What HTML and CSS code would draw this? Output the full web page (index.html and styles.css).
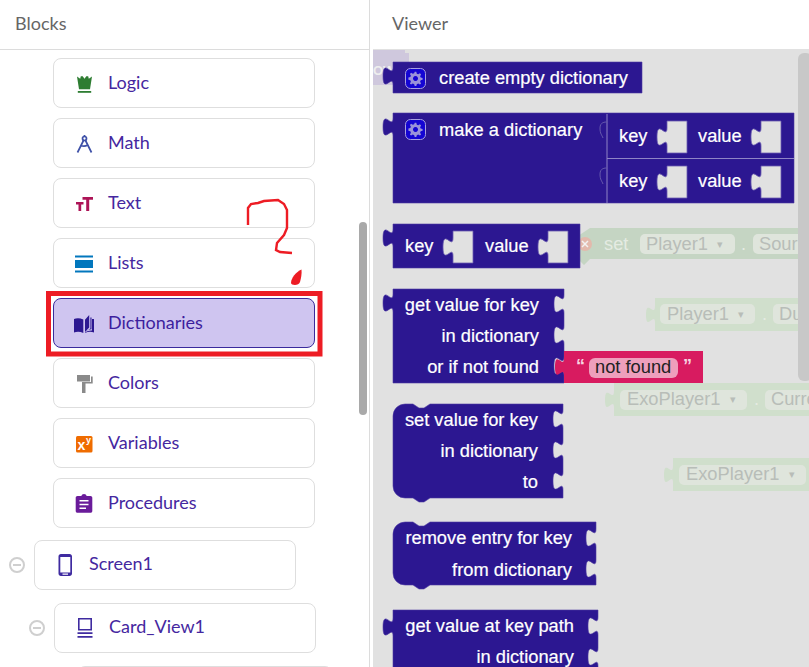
FILE: index.html
```html
<!DOCTYPE html>
<html lang="en">
<head>
<meta charset="utf-8">
<title>Blocks and Viewer</title>
<link rel="stylesheet" href="styles.css">
</head>
<body>
<div class="app">
  <aside class="sidebar">
    <h2 class="panel-title">Blocks</h2>
    <div class="tree">
      <div class="drawer-list">
        <button class="item"><span class="ico"><svg viewBox="0 0 20 20" width="20" height="20"><path class="i-logic" d="M3 3.500 6.200 5.800 6.800 3.200H8.700L10.500 5.800 12.300 3.200H14.200L14.800 5.800 18 3.500 16 16.200H5z"/><path class="i-logic" d="M3.800 18h13.400v1.800H3.800z"/></svg></span><span class="label">Logic</span></button>
        <button class="item"><span class="ico"><svg viewBox="0 0 20 20" width="20" height="20"><circle class="i-math-s" cx="10.500" cy="5.500" r="2"/><path class="i-math-s" d="M10.500 2v1.500M9.500 7.500 3.500 19.500M11.500 7.500 17.500 19.500M6.500 12.500c2.500 1 5 1 7-.5"/></svg></span><span class="label">Math</span></button>
        <button class="item"><span class="ico"><svg viewBox="0 0 20 20" width="20" height="20"><path class="i-text" d="M8.500 4h10.500v2.800h-3.800V18h-3V6.800H8.500zM2 9h7.500v2.500H7.200V18H4.500V11.500H2z"/></svg></span><span class="label">Text</span></button>
        <button class="item"><span class="ico"><svg viewBox="0 0 20 20" width="20" height="20"><path class="i-lists" d="M1 2.500h18v2H1zM1 7h18v8H1zM1 17.500h18v2H1z"/></svg></span><span class="label">Lists</span></button>
        <button class="item is-active"><span class="ico"><svg viewBox="0 0 20 20" width="20" height="20"><path class="i-dict" d="M0 6c2.500-1.200 6-1.200 9.300.5V20c-3-1.500-6.500-1.600-9.300-.5zM11 6.700 15.200 2v12.500L11 19z"/><path class="i-dict" d="M16.400 4.500h1.100v11.800c-2.500 0-4.600.8-6.500 2.800l5.400-3.600zM18 6h2v13.500c-2.800-1-6-1-9 .5v-.4c2-1.500 4.500-2.200 7-2z"/></svg></span><span class="label">Dictionaries</span></button>
        <button class="item"><span class="ico"><svg viewBox="0 0 20 20" width="20" height="20"><path class="i-colors" d="M3 2h13v6.500H3zM17 3.500h1.700v7H11.500V20H8V9h9z"/></svg></span><span class="label">Colors</span></button>
        <button class="item"><span class="ico"><svg viewBox="0 0 20 20" width="20" height="20"><rect class="i-vars" x="2" y="3" width="16.500" height="16.500" rx="1.500"/><text class="i-vars-x" x="3.500" y="16.500">x</text><text class="i-vars-y" x="12" y="10">y</text></svg></span><span class="label">Variables</span></button>
        <button class="item"><span class="ico"><svg viewBox="0 0 20 20" width="20" height="20"><path class="i-proc" d="M3.500 3H7.300a2.800 2.800 0 0 1 5.400 0h3.800c1 0 1.800.8 1.800 1.800V18c0 1-.8 1.800-1.800 1.800h-13c-1 0-1.800-.8-1.800-1.800V4.800C1.700 3.800 2.500 3 3.500 3zM5.500 7v1.600h9V7zM5.500 10.700v1.600h9v-1.600zM5.500 14.400V16h6.500v-1.600z" fill-rule="evenodd"/></svg></span><span class="label">Procedures</span></button>
      </div>
      <div class="tree-row tree-row-screen">
        <span class="toggle"></span>
        <button class="item"><span class="ico ico-tall"><svg viewBox="0 0 20 22" width="20" height="22"><path class="i-comp" fill-rule="evenodd" d="M6 0h8.500c1.500 0 2.500 1.100 2.500 2.500v17c0 1.400-1 2.500-2.500 2.500H6c-1.500 0-2.500-1.100-2.500-2.500v-17C3.500 1.100 4.500 0 6 0zM5.300 3v15.500h10V3zM7.500 19.500V20.700h5.500v-1.200z"/></svg></span><span class="label">Screen1</span></button>
      </div>
      <div class="tree-row tree-row-card">
        <span class="toggle"></span>
        <button class="item"><span class="ico ico-tall"><svg viewBox="0 0 20 22" width="20" height="22"><path class="i-comp" fill-rule="evenodd" d="M3 1h14v12.500H3zM4.600 2.600v9.300h10.800V2.600zM2.500 15.300h15v1.600h-15zM2.500 19h15v1.700h-15z"/></svg></span><span class="label">Card_View1</span></button>
      </div>
      <div class="tree-row tree-row-last">
        <button class="item item-cut"></button>
      </div>
    </div>
    <div class="sidebar-thumb"></div>
  </aside>
  <main class="viewer">
    <h2 class="panel-title panel-title-viewer">Viewer</h2>
    <div class="canvas">
      <svg class="workspace" viewBox="373 49 436 618" width="436" height="618">
        <defs>
          <path id="hole" d="M20 0V32H0V25c0-12-10 10-10-9s10 3 10-9V0z"/>
          <g id="gear">
            <rect class="gear-box" x="0.500" y="0.500" width="20" height="20" rx="5"/>
            <path class="gear-teeth" d="M9.700 3.800h1.600l.5 1.900 1.400.6 1.700-1 1.200 1.200-1 1.700.6 1.400 1.900.5v1.600l-1.900.6-.6 1.400 1 1.700-1.200 1.200-1.700-1-1.400.6-.5 1.900H9.700l-.5-1.900-1.400-.6-1.700 1-1.200-1.200 1-1.700-.6-1.400-1.900-.6V9.600l1.900-.5.6-1.400-1-1.700 1.200-1.200 1.700 1 1.400-.6zM10.500 8a2.500 2.500 0 1 0 .01 0z" fill-rule="evenodd"/>
          </g>
        </defs>

        <path class="ghost-purple" d="M373 50h32v3h4v32h-36z"/>
        <text class="ghost-ow" x="373" y="75">OW</text>

        <g class="ghost">
          <path class="g-block g-block-dark" d="M590 228H809V259H590l-6 6-6-6V236z"/>
          <circle class="g-x" cx="585" cy="244" r="7"/>
          <path class="g-x-mark" d="M582 241l6 6M588 241l-6 6"/>
          <text class="g-light" x="604" y="250">set</text>
          <rect class="g-pill" x="640" y="234" width="95" height="20" rx="5"/>
          <text class="g-txt" x="646" y="250">Player1</text>
          <text class="g-txt g-small" x="717" y="248">▾</text>
          <text class="g-light" x="741" y="250">.</text>
          <rect class="g-pill" x="753" y="234" width="60" height="20" rx="5"/>
          <text class="g-txt" x="759" y="250">Sour</text>

          <path class="g-block" d="M655 298H809V331H655V323c0-12-9 9-9-8s9 3 9-9z"/>
          <rect class="g-pill" x="660" y="304" width="95" height="20" rx="5"/>
          <text class="g-txt" x="667" y="320">Player1</text>
          <text class="g-txt g-small" x="738" y="318">▾</text>
          <text class="g-light" x="762" y="320">.</text>
          <rect class="g-pill" x="773" y="304" width="40" height="20" rx="5"/>
          <text class="g-txt" x="779" y="320">Du</text>

          <path class="g-block" d="M614 383H809V416H614V408c0-12-9 9-9-8s9 3 9-9z"/>
          <rect class="g-pill" x="620" y="390" width="127" height="20" rx="5"/>
          <text class="g-txt" x="627" y="405">ExoPlayer1</text>
          <text class="g-txt g-small" x="730" y="403">▾</text>
          <text class="g-light" x="754" y="405">.</text>
          <rect class="g-pill" x="765" y="390" width="50" height="20" rx="5"/>
          <text class="g-txt" x="771" y="405">Curre</text>

          <path class="g-block" d="M673 458H809V491H673V483c0-12-9 9-9-8s9 3 9-9z"/>
          <rect class="g-pill" x="679" y="465" width="127" height="20" rx="5"/>
          <text class="g-txt" x="686" y="480">ExoPlayer1</text>
          <text class="g-txt g-small" x="789" y="478">▾</text>
        </g>

        <rect class="scroll-thumb" x="798" y="53" width="14" height="328" rx="6"/>

        <!-- create empty dictionary -->
        <path class="blk" d="M393 62H642V93H393V85c0-12-10 10-10-9s10 3 10-9z"/>
        <use href="#gear" x="405" y="68"/>
        <text class="bt" x="439" y="84">create empty dictionary</text>

        <!-- make a dictionary -->
        <path class="blk" d="M393 113H794V203H393V136c0-12-10 10-10-9s10 3 10-9z"/>
        <path class="blk-line" d="M607 114V203M607 158.500H794"/>
        <path class="blk-socket" d="M607 122c-2 0-7 0-7 6s2 7 3 10M607 168c-2 0-7 0-7 6s2 7 3 10"/>
        <use href="#gear" x="405" y="119"/>
        <text class="bt" x="439" y="136">make a dictionary</text>
        <text class="bt" x="619" y="142">key</text>
        <use class="hole" href="#hole" x="667" y="121"/>
        <text class="bt" x="698" y="142">value</text>
        <use class="hole" href="#hole" x="761" y="121"/>
        <text class="bt" x="619" y="187">key</text>
        <use class="hole" href="#hole" x="667" y="166"/>
        <text class="bt" x="698" y="187">value</text>
        <use class="hole" href="#hole" x="761" y="166"/>

        <!-- key value -->
        <path class="blk" d="M393 224H580V268H393V247c0-12-10 10-10-9s10 3 10-9z"/>
        <text class="bt" x="405" y="252">key</text>
        <use class="hole" href="#hole" x="453" y="231"/>
        <text class="bt" x="485" y="252">value</text>
        <use class="hole" href="#hole" x="548" y="231"/>

        <!-- get value for key -->
        <path class="blk" d="M393 289H564V295c0 12-10-10-10 9s10-3 10 9V326c0 12-10-10-10 9s10-3 10 9V357c0 12-10-10-10 9s10-3 10 9V383H393V312c0-12-10 10-10-9s10 3 10-9z"/>
        <text class="bt end" x="539" y="311">get value for key</text>
        <text class="bt end" x="539" y="342">in dictionary</text>
        <text class="bt end" x="539" y="373">or if not found</text>

        <path class="blk-pink" d="M564 351H703V383H564V376c0-12-9 9-9-9s9 3 9-9z"/>
        <text class="quote" x="576" y="372">“</text>
        <rect class="pill-pink" x="589" y="358" width="89" height="20" rx="6"/>
        <text class="bt-dark" x="595" y="373">not found</text>
        <text class="quote" x="683" y="372">”</text>

        <!-- set value for key -->
        <path class="blk" d="M393 416a12 12 0 0 1 12-12h8l6 4h5l6-4H563V410c0 12-10-10-10 9s10-3 10 9V441c0 12-10-10-10 9s10-3 10 9V472c0 12-10-10-10 9s10-3 10 9V498H430l-6 4h-5l-6-4H405a12 12 0 0 1-12-12z"/>
        <text class="bt end" x="538" y="426">set value for key</text>
        <text class="bt end" x="538" y="457">in dictionary</text>
        <text class="bt end" x="538" y="488">to</text>

        <!-- remove entry for key -->
        <path class="blk" d="M393 534a12 12 0 0 1 12-12h8l6 4h5l6-4H596V529c0 12-10-10-10 9s10-3 10 9V560c0 12-10-10-10 9s10-3 10 9V585H430l-6 4h-5l-6-4H405a12 12 0 0 1-12-12z"/>
        <text class="bt end" x="572" y="544">remove entry for key</text>
        <text class="bt end" x="572" y="576">from dictionary</text>

        <!-- get value at key path -->
        <path class="blk" d="M393 610H598V617c0 12-10-10-10 9s10-3 10 9V648c0 12-10-10-10 9s10-3 10 9V680H393V636c0-12-10 10-10-9s10 3 10-9z"/>
        <text class="bt end" x="574" y="632">get value at key path</text>
        <text class="bt end" x="574" y="663">in dictionary</text>
      </svg>
    </div>
  </main>
  <svg class="scribble" viewBox="0 0 809 667" width="809" height="667" aria-hidden="true">
    <rect class="red-box" x="48.500" y="293.500" width="271.500" height="60.500"/>
    <path class="red-line" d="M248 225V208L251 204L258 203L264 201L278 200L284 204L287 210V228L284 235L277 243L276 250L280 252L292 253"/>
    <path class="red-fill" d="M301.500 269.500C296 272 291 278 291 283C291 285.500 299 286 300 282C301 278 302 274 301.500 269.500z"/>
  </svg>
</div>
</body>
</html>
```
FILE: styles.css
```css
* { box-sizing: border-box; }
html, body { margin: 0; height: 100%; overflow: hidden; background: #fff; }
body { font-family: "Lato", "Noto Sans", sans-serif; }

.app { position: relative; display: flex; width: 809px; height: 667px; overflow: hidden; }

.sidebar { position: relative; width: 370px; height: 667px; border-right: 1px solid #dcdcdc; flex: none; overflow: hidden; }

.panel-title { margin: 0; height: 50px; padding: 12px 0 0 15px; font-size: 18px; line-height: 22px; font-weight: 400; color: #666; border-bottom: 1px solid #dcdcdc; }
.panel-title-viewer { height: 49px; padding-left: 22px; border-bottom: 0; }

.tree { display: flex; flex-direction: column; padding-top: 8px; }
.drawer-list { display: flex; flex-direction: column; gap: 10px; padding-left: 53px; }

.item { display: flex; align-items: center; width: 262px; height: 50px; padding: 0 0 0 20px; background: #fff; border: 1px solid #dedede; border-radius: 8px; font: inherit; font-size: 18px; color: #4527a0; text-align: left; flex: none; }
.item .label { margin-left: 14px; line-height: 22px; position: relative; top: -1px; }
.tree-row .item .label { top: -2px; }
.ico { display: block; width: 20px; height: 20px; flex: none; }
.ico-tall { height: 22px; }
.ico svg { display: block; margin: 0 auto; }

.is-active { background: #cfc5f0; border-color: #3a2a9c; color: #3d1f9e; }

.tree-row { display: flex; align-items: center; gap: 9px; }
.tree-row-screen { margin-top: 12px; padding-left: 9px; }
.tree-row-card { margin-top: 13px; padding-left: 29px; }
.tree-row-last { margin-top: 13px; padding-left: 77px; }
.item-cut { width: 256px; }

.toggle { position: relative; display: block; width: 16px; height: 16px; flex: none; border: 2px solid #cfcfcf; border-radius: 50%; }
.toggle::after { content: ""; position: absolute; left: 2px; right: 2px; top: 5px; height: 2px; background: #cfcfcf; }

.sidebar-thumb { position: absolute; left: 359px; top: 222px; width: 8px; height: 193px; border-radius: 4px; background: #a9a9a9; }

.viewer { flex: 1; min-width: 0; display: flex; flex-direction: column; }
.canvas { flex: 1; margin-left: 3px; background: #e1e1e1; overflow: hidden; }
.workspace { display: block; }

.blk { fill: #2c1791; stroke: #4d3ba3; stroke-width: 0.600; }
.blk-line { fill: none; stroke: #8f84c6; stroke-width: 1; }
.blk-socket { fill: none; stroke: #6659ad; stroke-width: 1; }
.blk-pink { fill: #d81b60; }
.pill-pink { fill: #ee9fbc; }

.hole { fill: #e1e1e1; stroke: #6a5cb0; stroke-width: 0.800; }

.bt { font-family: "Liberation Sans", Arial, sans-serif; font-size: 18.300px; fill: #fff; stroke: #fff; stroke-width: 0.200; }
.bt.end { text-anchor: end; }
.bt-dark { font-family: "Liberation Sans", Arial, sans-serif; font-size: 18.300px; fill: #222; }
.quote { font-family: "Liberation Sans", Arial, sans-serif; font-size: 18px; font-weight: 700; fill: #f7d6e2; }

.gear-box { fill: #1405d3; stroke: #a79fe0; stroke-width: 1; }
.gear-teeth { fill: #9a93d9; }

.ghost-purple { fill: #cfc8dd; }
.ghost-ow { font-family: "Liberation Sans", Arial, sans-serif; font-size: 13px; font-weight: 700; fill: #eee; }

.g-block { fill: #d0dfcc; }
.g-block-dark { fill: #c5d5c3; }
.g-x { fill: #e3b9ac; }
.g-x-mark { fill: none; stroke: #f2f2f2; stroke-width: 1.500; }
.g-pill { fill: #dfe5dc; }
.g-txt { font-family: "Liberation Sans", Arial, sans-serif; font-size: 18.300px; fill: #b8bdb8; }
.g-small { font-size: 11px; }
.g-light { font-family: "Liberation Sans", Arial, sans-serif; font-size: 18.300px; fill: #e4ebe2; }

.scroll-thumb { fill: #c8c8c8; }

.i-logic { fill: #2e7d32; }
.i-math-s { fill: none; stroke: #3f51a8; stroke-width: 1.700; }
.i-text { fill: #ad1457; }
.i-lists { fill: #0277bd; }
.i-dict { fill: #2c1791; }
.i-colors { fill: #8a8a8a; }
.i-vars { fill: #ef6c00; }
.i-vars-x { font-family: "Liberation Sans", Arial, sans-serif; font-size: 14px; font-weight: 700; fill: #fff; }
.i-vars-y { font-family: "Liberation Sans", Arial, sans-serif; font-size: 9px; font-weight: 700; fill: #fff; }
.i-proc { fill: #6a1b9a; }
.i-comp { fill: #3f2ba0; }

.scribble { position: absolute; left: 0; top: 0; pointer-events: none; }
.red-box { fill: none; stroke: #ed1c24; stroke-width: 5; }
.red-line { fill: none; stroke: #ed1c24; stroke-width: 2.400; }
.red-fill { fill: #ed1c24; }
```
